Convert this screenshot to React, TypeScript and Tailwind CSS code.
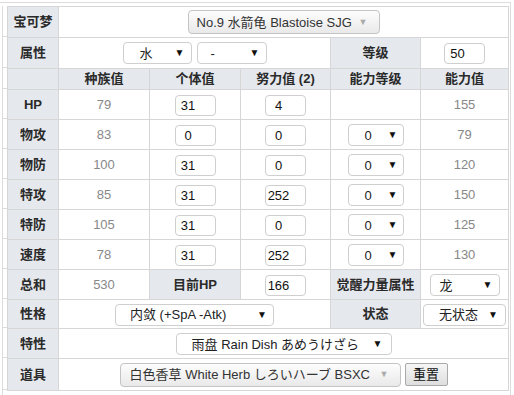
import React from "react";

const FONT = { fontFamily: '"Liberation Sans", "Noto Sans CJK SC", sans-serif' };

function Sel({ text, cls, caret = "text-[#111]" }: { text: string; cls: string; caret?: string }) {
  return (
    <div
      className={
        "inline-flex items-center justify-between h-[22px] border border-[#cfcfcf] rounded-[4px] bg-white text-[13px] text-[#222] align-middle " +
        cls
      }
    >
      <span className="leading-none whitespace-nowrap">{text}</span>
      <span className={"text-[10px] leading-none " + caret}>▼</span>
    </div>
  );
}

function GSel({ text, cls }: { text: string; cls: string }) {
  return (
    <div
      className={
        "inline-flex items-center justify-between h-[24px] border border-[#c4c4c4] rounded-[4px] bg-gradient-to-b from-[#fdfdfd] to-[#e9e9e9] text-[13px] text-[#333] align-middle " +
        cls
      }
    >
      <span className="leading-none whitespace-nowrap">{text}</span>
      <span className="text-[9px] leading-none text-[#aaa]">▼</span>
    </div>
  );
}

function Inp({ v }: { v: string }) {
  return (
    <div className="inline-flex items-center justify-center w-[41px] h-[21px] border border-[#cfcfcf] rounded-[4px] bg-white text-[13px] text-[#111] pl-[1px] pr-[15px] align-middle">
      <span className="leading-none whitespace-nowrap">{v}</span>
    </div>
  );
}

const td = "border border-[#d6d6d6] p-0 text-center align-middle";
const lab = td + " bg-[#e5e8ed] font-bold text-[13px] text-[#2a2a2a]";
const num = td + " text-[13px] text-[#888]";

const stats = [
  { n: "HP", b: "79", iv: "31", ev: "4", st: null, v: "155" },
  { n: "物攻", b: "83", iv: "0", ev: "0", st: "0", v: "79" },
  { n: "物防", b: "100", iv: "31", ev: "0", st: "0", v: "120" },
  { n: "特攻", b: "85", iv: "31", ev: "252", st: "0", v: "150" },
  { n: "特防", b: "105", iv: "31", ev: "0", st: "0", v: "125" },
  { n: "速度", b: "78", iv: "31", ev: "252", st: "0", v: "130" },
];

export default function App() {
  const rowHeights = [31, 31, 21, 30, 30, 30, 30, 30, 30, 30, 29, 30, 32];
  return (
    <div className="w-[514px] h-[395px] bg-white overflow-hidden" style={FONT}>
      <div className="mt-[2px] w-[511px] h-[393px] border-t border-r border-[#dcdcdc] flex">
        <div className="w-[7px] shrink-0 pl-[2px] pt-[3px]">
          <div className="w-[5px] h-full border-l border-[#dcdcdc] flex flex-col">
            {rowHeights.map((h, i) => (
              <div key={i} className="border-b border-[#dcdcdc] shrink-0" style={{ height: h }} />
            ))}
          </div>
        </div>
        <div className="pt-[3px]">
          <table className="border-collapse table-fixed w-[501px]">
            <colgroup>
              <col className="w-[51px]" />
              <col className="w-[91px]" />
              <col className="w-[91px]" />
              <col className="w-[90px]" />
              <col className="w-[90px]" />
              <col className="w-[88px]" />
            </colgroup>
            <tbody>
              <tr className="h-[31px]">
                <td className={lab}>宝可梦</td>
                <td className={td} colSpan={5}>
                  <GSel text="No.9 水箭龟 Blastoise SJG" cls="w-[192px] pl-[8px] pr-[11px]" />
                </td>
              </tr>
              <tr className="h-[31px]">
                <td className={lab}>属性</td>
                <td className={td} colSpan={3}>
                  <div className="flex justify-center gap-[5px]">
                    <Sel text="水" cls="w-[69px] pl-[16px] pr-[6px]" />
                    <Sel text="-" cls="w-[70px] pl-[13px] pr-[6px]" />
                  </div>
                </td>
                <td className={lab}>等级</td>
                <td className={td}>
                  <Inp v="50" />
                </td>
              </tr>
              <tr className="h-[21px]">
                <td className={lab}></td>
                <td className={lab}>种族值</td>
                <td className={lab}>个体值</td>
                <td className={lab}>努力值 (2)</td>
                <td className={lab}>能力等级</td>
                <td className={lab}>能力值</td>
              </tr>
              {stats.map((s) => (
                <tr key={s.n} className="h-[30px]">
                  <td className={lab}>{s.n}</td>
                  <td className={num}>{s.b}</td>
                  <td className={td}>
                    <Inp v={s.iv} />
                  </td>
                  <td className={td}>
                    <Inp v={s.ev} />
                  </td>
                  <td className={td}>
                    {s.st !== null && <Sel text={s.st} cls="w-[56px] pl-[16px] pr-[5px]" />}
                  </td>
                  <td className={num}>{s.v}</td>
                </tr>
              ))}
              <tr className="h-[30px]">
                <td className={lab}>总和</td>
                <td className={num}>530</td>
                <td className={lab}>目前HP</td>
                <td className={td}>
                  <Inp v="166" />
                </td>
                <td className={lab}>觉醒力量属性</td>
                <td className={td}>
                  <Sel text="龙" cls="w-[70px] pl-[9px] pr-[6px]" />
                </td>
              </tr>
              <tr className="h-[29px]">
                <td className={lab}>性格</td>
                <td className={td} colSpan={3}>
                  <Sel text="内敛 (+SpA -Atk)" cls="w-[159px] pl-[14px] pr-[6px]" />
                </td>
                <td className={lab}>状态</td>
                <td className={td}>
                  <Sel text="无状态" cls="w-[83px] pl-[15px] pr-[7px]" />
                </td>
              </tr>
              <tr className="h-[30px]">
                <td className={lab}>特性</td>
                <td className={td} colSpan={5}>
                  <Sel text="雨盘 Rain Dish あめうけざら" cls="w-[216px] pl-[15px] pr-[8px]" />
                </td>
              </tr>
              <tr className="h-[32px]">
                <td className={lab}>道具</td>
                <td className={td} colSpan={5}>
                  <div className="flex justify-center items-center gap-[4px]">
                    <GSel text="白色香草 White Herb しろいハーブ BSXC" cls="w-[281px] pl-[9px] pr-[11px]" />
                    <div className="h-[23px] w-[43px] flex items-center justify-center border border-[#a9a9a9] rounded-[2px] bg-gradient-to-b from-[#f6f6f6] to-[#dedede] text-[13px] text-[#111]">
                      重置
                    </div>
                  </div>
                </td>
              </tr>
            </tbody>
          </table>
        </div>
      </div>
    </div>
  );
}
